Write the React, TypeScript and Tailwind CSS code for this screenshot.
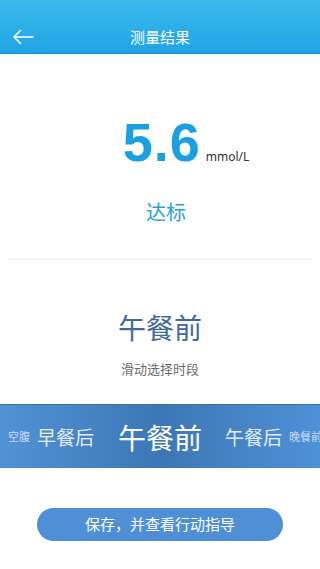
const cjk = { fontFamily: '"Noto Sans CJK SC", "Noto Sans", sans-serif' };

function BackArrow() {
  return (
    <svg width="22" height="16" viewBox="0 0 22 16" fill="none">
      <path
        d="M21 8H2M8.5 1.5L2 8l6.5 6.5"
        stroke="white"
        strokeWidth="1.6"
        strokeLinecap="round"
        strokeLinejoin="round"
      />
    </svg>
  );
}

const periods = [
  { label: "空腹", cls: "text-[11px] text-white/70" },
  { label: "早餐后", cls: "ml-[7px] text-[19px] text-white/85" },
  { label: "午餐前", cls: "ml-[24px] text-[28px] text-white" },
  { label: "午餐后", cls: "ml-[23px] text-[19px] text-white/85" },
  { label: "晚餐前", cls: "ml-[7px] text-[11px] text-white/70" },
];

export default function App() {
  return (
    <div className="flex h-[569px] w-[320px] flex-col overflow-hidden bg-white" style={cjk}>
      <header className="flex h-[54px] shrink-0 items-center border-b border-[#1994d0] bg-linear-to-b from-[#3bbaec] to-[#1ea4e5] pt-[20px]">
        <div className="flex w-full items-center">
          <div className="ml-[12px] flex w-[30px] items-center">
            <BackArrow />
          </div>
          <h1 className="ml-[88px] text-[15px] leading-[20px] text-white">测量结果</h1>
        </div>
      </header>

      <div className="mt-[61px] flex items-baseline justify-center pl-[52px]">
        <span
          className="text-[54px] leading-[54px] font-bold tracking-[1px] text-[#1a9fe2]"
          style={{ fontFamily: '"Liberation Sans", sans-serif' }}
        >
          5.6
        </span>
        <span
          className="ml-[5px] text-[12px] text-[#333]"
          style={{ fontFamily: '"Noto Sans", sans-serif' }}
        >
          mmol/L
        </span>
      </div>

      <p className="mt-[31px] pl-[12px] text-center text-[20px] leading-[24px] text-[#2aa1dc]">达标</p>

      <div className="mx-[8px] mt-[34px] h-[2px] bg-[#f3f3f3]" />

      <p className="mt-[50px] text-center text-[28px] leading-[35px] text-[#3f6a9c]">午餐前</p>
      <p className="mt-[15px] text-center text-[13px] leading-[17px] text-[#6b6b6b]">滑动选择时段</p>

      <div className="mt-[27px] flex h-[64px] shrink-0 items-center overflow-hidden border-t border-[#3a6fa8] bg-linear-to-r from-[#5193d6] via-[#3c77b5] to-[#4f91d7] pl-[8px] whitespace-nowrap">
        {periods.map((p) => (
          <span key={p.label} className={`shrink-0 leading-none ${p.cls}`}>
            {p.label}
          </span>
        ))}
      </div>

      <button className="mx-[37px] mt-[40px] h-[33px] shrink-0 rounded-full bg-[#4e8fd6] text-[15px] text-white">
        保存，并查看行动指导
      </button>
    </div>
  );
}
